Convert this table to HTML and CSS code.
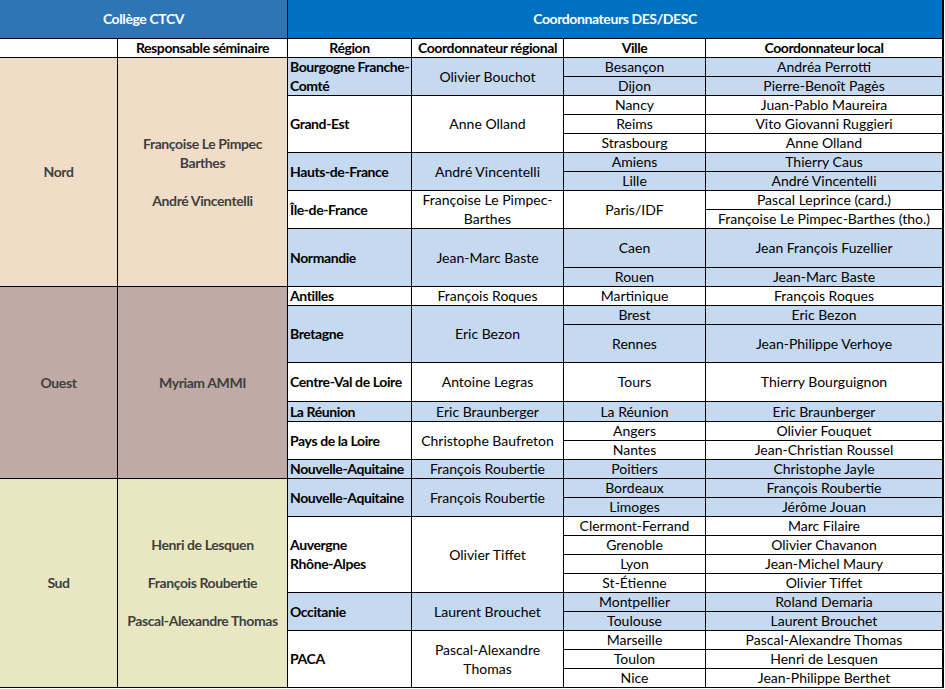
FILE: index.html
```html
<!DOCTYPE html>
<html lang="fr">
<head>
<meta charset="utf-8">
<title>Coordonnateurs DES/DESC</title>
<link rel="stylesheet" href="styles.css">
</head>
<body>
<div class="sheet">
  <div class="c hd hd1 cs2">Collège CTCV</div>
  <div class="c hd hd2 cs4">Coordonnateurs DES/DESC</div>

  <div class="c sub"></div>
  <div class="c sub">Responsable séminaire</div>
  <div class="c sub">Région</div>
  <div class="c sub">Coordonnateur régional</div>
  <div class="c sub">Ville</div>
  <div class="c sub">Coordonnateur local</div>

  <!-- Nord -->
  <div class="c zone nord s11">Nord</div>
  <div class="c zone nord s11">Françoise Le Pimpec<br>Barthes<br><br>André Vincentelli</div>
  <div class="c reg blue s2">Bourgogne Franche-<br>Comté</div>
  <div class="c blue s2">Olivier Bouchot</div>
  <div class="c blue">Besançon</div>
  <div class="c blue">Andréa Perrotti</div>
  <div class="c blue">Dijon</div>
  <div class="c blue">Pierre-Benoît Pagès</div>

  <div class="c reg s3">Grand-Est</div>
  <div class="c s3">Anne Olland</div>
  <div class="c">Nancy</div>
  <div class="c">Juan-Pablo Maureira</div>
  <div class="c">Reims</div>
  <div class="c">Vito Giovanni Ruggieri</div>
  <div class="c">Strasbourg</div>
  <div class="c">Anne Olland</div>

  <div class="c reg blue s2">Hauts-de-France</div>
  <div class="c blue s2">André Vincentelli</div>
  <div class="c blue">Amiens</div>
  <div class="c blue">Thierry Caus</div>
  <div class="c blue">Lille</div>
  <div class="c blue">André Vincentelli</div>

  <div class="c reg s2">Île-de-France</div>
  <div class="c s2">Françoise Le Pimpec-<br>Barthes</div>
  <div class="c s2">Paris/IDF</div>
  <div class="c">Pascal Leprince (card.)</div>
  <div class="c">Françoise Le Pimpec-Barthes (tho.)</div>

  <div class="c reg blue s2">Normandie</div>
  <div class="c blue s2">Jean-Marc Baste</div>
  <div class="c blue">Caen</div>
  <div class="c blue">Jean François Fuzellier</div>
  <div class="c blue">Rouen</div>
  <div class="c blue">Jean-Marc Baste</div>

  <!-- Ouest -->
  <div class="c zone ouest s8">Ouest</div>
  <div class="c zone ouest s8">Myriam AMMI</div>
  <div class="c reg">Antilles</div>
  <div class="c">François Roques</div>
  <div class="c">Martinique</div>
  <div class="c">François Roques</div>

  <div class="c reg blue s2">Bretagne</div>
  <div class="c blue s2">Eric Bezon</div>
  <div class="c blue">Brest</div>
  <div class="c blue">Eric Bezon</div>
  <div class="c blue">Rennes</div>
  <div class="c blue">Jean-Philippe Verhoye</div>

  <div class="c reg">Centre-Val de Loire</div>
  <div class="c">Antoine Legras</div>
  <div class="c">Tours</div>
  <div class="c">Thierry Bourguignon</div>

  <div class="c reg blue">La Réunion</div>
  <div class="c blue">Eric Braunberger</div>
  <div class="c blue">La Réunion</div>
  <div class="c blue">Eric Braunberger</div>

  <div class="c reg s2">Pays de la Loire</div>
  <div class="c s2">Christophe Baufreton</div>
  <div class="c">Angers</div>
  <div class="c">Olivier Fouquet</div>
  <div class="c">Nantes</div>
  <div class="c">Jean-Christian Roussel</div>

  <div class="c reg blue">Nouvelle-Aquitaine</div>
  <div class="c blue">François Roubertie</div>
  <div class="c blue">Poitiers</div>
  <div class="c blue">Christophe Jayle</div>

  <!-- Sud -->
  <div class="c zone sud s11">Sud</div>
  <div class="c zone sud s11">Henri de Lesquen<br><br>François Roubertie<br><br>Pascal-Alexandre Thomas</div>
  <div class="c reg blue s2">Nouvelle-Aquitaine</div>
  <div class="c blue s2">François Roubertie</div>
  <div class="c blue">Bordeaux</div>
  <div class="c blue">François Roubertie</div>
  <div class="c blue">Limoges</div>
  <div class="c blue">Jérôme Jouan</div>

  <div class="c reg s4">Auvergne<br>Rhône-Alpes</div>
  <div class="c s4">Olivier Tiffet</div>
  <div class="c">Clermont-Ferrand</div>
  <div class="c">Marc Filaire</div>
  <div class="c">Grenoble</div>
  <div class="c">Olivier Chavanon</div>
  <div class="c">Lyon</div>
  <div class="c">Jean-Michel Maury</div>
  <div class="c">St-Étienne</div>
  <div class="c">Olivier Tiffet</div>

  <div class="c reg blue s2">Occitanie</div>
  <div class="c blue s2">Laurent Brouchet</div>
  <div class="c blue">Montpellier</div>
  <div class="c blue">Roland Demaria</div>
  <div class="c blue">Toulouse</div>
  <div class="c blue">Laurent Brouchet</div>

  <div class="c reg s3">PACA</div>
  <div class="c s3">Pascal-Alexandre<br>Thomas</div>
  <div class="c">Marseille</div>
  <div class="c">Pascal-Alexandre Thomas</div>
  <div class="c">Toulon</div>
  <div class="c">Henri de Lesquen</div>
  <div class="c">Nice</div>
  <div class="c">Jean-Philippe Berthet</div>
</div>
</body>
</html>
```
FILE: styles.css
```css
html, body {
  margin: 0;
  padding: 0;
  background: #ffffff;
}

.sheet {
  display: grid;
  width: 943px;
  grid-template-columns: 117px 169px 123px 151px 141px 236px;
  grid-template-rows:
    38px 18px
    18px 18px 18px 18px 18px 18px 18px 18px 18px
    38px 18px 18px 18px 37px 38px 19px
    18px 18px 18px 18px 18px 18px 18px 18px 18px 18px 18px 18px 18px 18px;
  gap: 1px;
  padding: 0 1px 1px 0;
  background: #000000;
  font-family: Lato, "Open Sans", sans-serif;
  font-size: 14px;
  line-height: 19px;
  color: #000000;
}

.c {
  background: #ffffff;
  display: flex;
  align-items: center;
  justify-content: center;
  text-align: center;
  white-space: nowrap;
  overflow: hidden;
  padding-bottom: 1px;
}

.cs2 { grid-column: span 2; }
.cs4 { grid-column: span 4; }
.s2 { grid-row: span 2; }
.s3 { grid-row: span 3; }
.s4 { grid-row: span 4; }
.s8 { grid-row: span 8; }
.s11 { grid-row: span 11; }

.hd {
  color: #ffffff;
  font-weight: 700;
  letter-spacing: -0.4px;
}
.hd1 { background: #2f74b5; }
.hd2 { background: #0070c0; }

.sub {
  font-weight: 700;
  letter-spacing: -0.4px;
}

.reg {
  font-weight: 700;
  letter-spacing: -0.4px;
  justify-content: flex-start;
  text-align: left;
  padding-left: 2px;
}

.blue { background: #c5d9f0; }

.zone {
  font-weight: 700;
  letter-spacing: -0.4px;
  color: #3f3f3f;
}
.nord { background: #f0ddc8; }
.ouest { background: #bfaaa6; }
.sud { background: #e9e7c1; }
```
